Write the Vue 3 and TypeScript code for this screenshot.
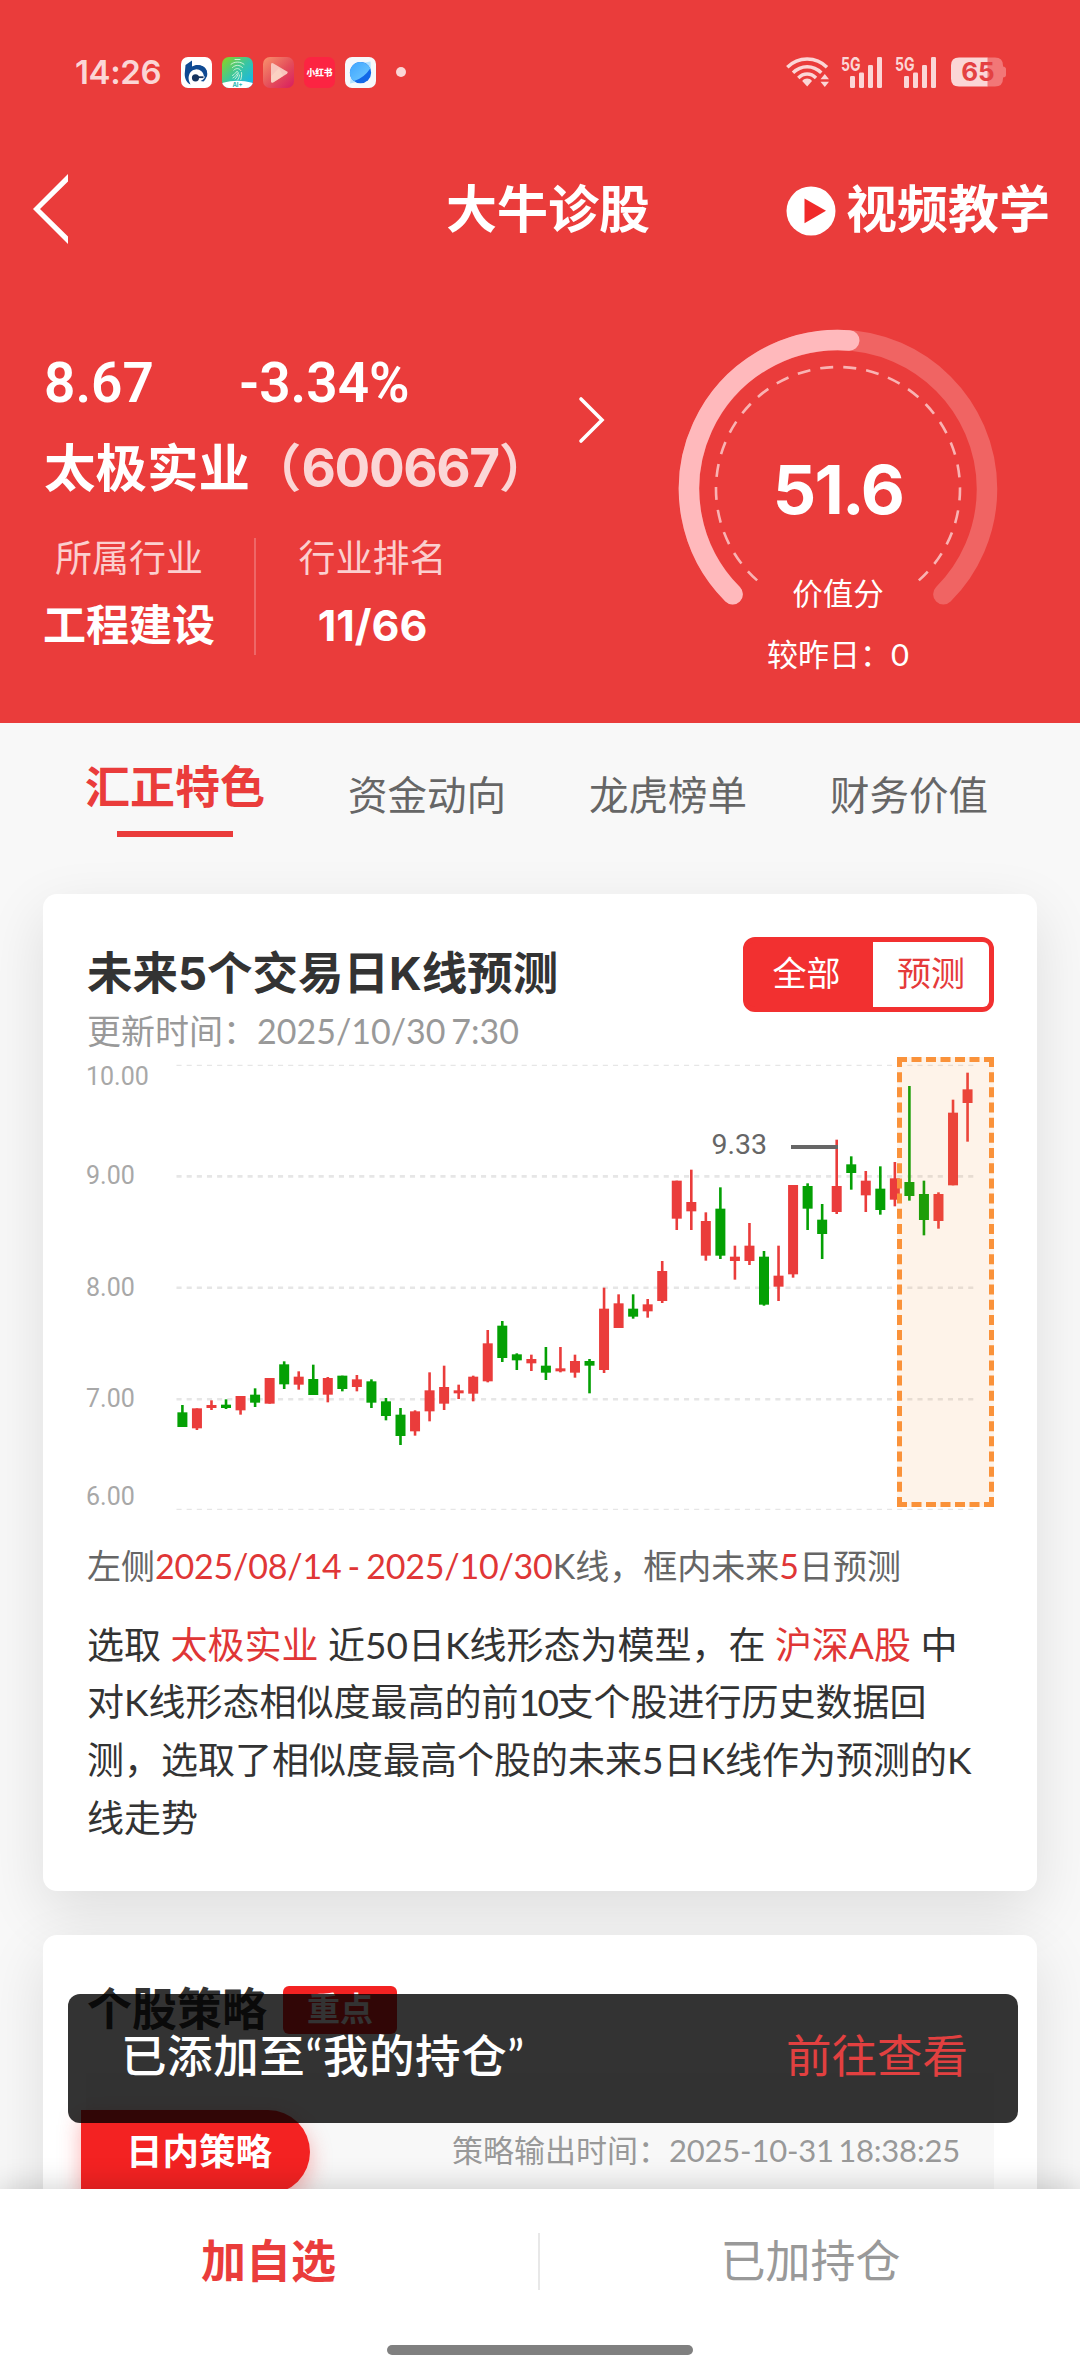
<script setup lang="ts">
interface Tab {
  label: string
  active: boolean
}

interface Candle {
  x: number
  color: string
  high: number
  top: number
  height: number
  low: number
}

const tabs: Tab[] = [
  { label: '汇正特色', active: true },
  { label: '资金动向', active: false },
  { label: '龙虎榜单', active: false },
  { label: '财务价值', active: false },
]

const UP = '#ea3c3b'
const DOWN = '#04a004'

// [direction, high, body top, body bottom, low] on the chart's fine vertical scale (3 units per pixel)
const series: [number, number, number, number, number][] = [
  [0, 1095, 1117, 1161, 1161], [1, 1105, 1105, 1165, 1170], [1, 1081, 1095, 1104, 1110],
  [0, 1078, 1094, 1104, 1107], [1, 1068, 1068, 1111, 1124], [0, 1045, 1064, 1088, 1101],
  [1, 1014, 1014, 1091, 1091], [0, 964, 973, 1033, 1047], [1, 994, 1010, 1034, 1049],
  [0, 974, 1017, 1065, 1065], [1, 1011, 1014, 1064, 1087], [0, 1007, 1007, 1047, 1054],
  [1, 1005, 1018, 1041, 1054], [0, 1018, 1024, 1088, 1104], [0, 1074, 1084, 1128, 1141],
  [0, 1104, 1124, 1188, 1215], [1, 1111, 1114, 1174, 1187], [1, 997, 1051, 1114, 1144],
  [1, 977, 1041, 1091, 1110], [1, 1034, 1051, 1060, 1077], [1, 1007, 1010, 1061, 1084],
  [1, 870, 910, 1024, 1027], [0, 843, 857, 954, 966], [0, 940, 943, 961, 990],
  [1, 944, 957, 970, 993], [0, 921, 977, 998, 1020], [1, 921, 985, 994, 997],
  [1, 944, 963, 998, 1013], [0, 957, 963, 977, 1060], [1, 743, 806, 990, 999],
  [1, 763, 790, 864, 864], [0, 763, 806, 830, 836], [1, 777, 793, 814, 833],
  [1, 663, 693, 783, 789], [1, 422, 422, 536, 570], [1, 389, 486, 514, 570],
  [1, 517, 543, 647, 662], [0, 442, 506, 647, 657], [1, 617, 650, 663, 719],
  [1, 549, 617, 663, 675], [0, 633, 650, 794, 797], [1, 617, 707, 740, 783],
  [1, 435, 435, 703, 713], [0, 430, 438, 506, 570], [0, 492, 539, 582, 657],
  [1, 299, 438, 516, 522], [0, 349, 373, 399, 449], [1, 393, 422, 466, 516],
  [0, 379, 446, 510, 524], [1, 366, 415, 479, 499], [0, 138, 426, 468, 482],
  [0, 422, 462, 540, 586], [1, 457, 462, 543, 566], [1, 179, 218, 436, 436],
  [1, 98, 148, 189, 305],
]

const toY = (v: number): number => v / 3 - 17

const candles: Candle[] = series.map(([up, high, top, bottom, low], i) => ({
  x: 94.4 + i * 14.54,
  color: up ? UP : DOWN,
  high: toY(high),
  top: toY(top),
  height: (bottom - top) / 3,
  low: toY(low),
}))

const gridLines = [
  { y: 8.4, w: 1.2 },
  { y: 119.4, w: 2.6 },
  { y: 230.7, w: 2.6 },
  { y: 342.3, w: 2.6 },
  { y: 452.4, w: 1.2 },
]

const axisLabels = [
  { text: '10.00', y: 28 },
  { text: '9.00', y: 127.3 },
  { text: '8.00', y: 238.7 },
  { text: '7.00', y: 350 },
  { text: '6.00', y: 448 },
]

// Gauge geometry: a 270° dial with the score measured from the lower left
const score = 51.6
const polar = (r: number, deg: number): string => {
  const a = (deg * Math.PI) / 180
  return `${(160 + r * Math.sin(a)).toFixed(2)} ${(160 - r * Math.cos(a)).toFixed(2)}`
}
const arc = (r: number, from: number, to: number): string =>
  `M${polar(r, from)} A${r} ${r} 0 ${to - from > 180 ? 1 : 0} 1 ${polar(r, to)}`

const trackPath = arc(149, -135, 135)
const valuePath = arc(149, -135, -135 + (270 * score) / 100)
const dashPath = arc(122, -138.5, 138.5)
</script>

<template>
  <div class="page">
    <header class="hero">
      <div class="status">
        <span class="clock">14:26</span>
        <div class="apps">
          <svg class="app" viewBox="0 0 31 31">
            <rect width="31" height="31" rx="7" fill="#fff" />
            <path d="M4.500 8 L11 3.500 V10.500 C14 7.700 19.500 7.200 23 10 C27.500 13.700 27 20.500 22.500 24.500 L19.500 24 C23 22.500 24.500 20 24 17.500 C23.500 13.500 19.500 11.500 15.500 12 C9 12.500 6.500 19 8 24 L9.500 27.500 C5.500 25.500 3.700 21.500 3.700 17 Z" fill="#0f4a93" />
            <path d="M11 9.500C15 7 20 7.500 23.500 10.500C26.500 13.500 26.500 17 26 19.500H23C22.500 15 19 12 15 12.200L11 13Z" fill="#0f4a93" />
            <circle cx="14.500" cy="20.800" r="3.600" fill="#16345f" />
            <path d="M14 20.200H22.500" stroke="#16345f" stroke-width="1.800" />
          </svg>
          <svg class="app" viewBox="0 0 31 31">
            <defs>
              <linearGradient id="fp" x1="0" y1="0" x2="1" y2="1">
                <stop offset="0" stop-color="#8fd41c" />
                <stop offset=".5" stop-color="#38c5a4" />
                <stop offset="1" stop-color="#12b2f5" />
              </linearGradient>
              <clipPath id="fpc"><rect width="31" height="31" rx="7" /></clipPath>
            </defs>
            <g clip-path="url(#fpc)">
              <rect width="31" height="31" fill="url(#fp)" />
              <ellipse cx="15.500" cy="29.500" rx="19" ry="5.800" fill="#fff" />
            </g>
            <g fill="none" stroke="#d9f7dc" stroke-width=".9" stroke-linecap="round">
              <path d="M13 2.500H18M9 7.300C12.500 4.300 18.500 4.300 22 7.300M10.500 10.500C13.500 7.600 17.500 7.600 20.500 10.500M11.800 13.200C14 10.800 17.300 11 18.800 13.500M10.500 18.500C13 17.500 13.500 15 15 14.500C17.500 14.500 16 19.500 13 22M11 21C14 19.500 14.500 17 15.200 16.500M19.500 15.500C20 18 19.500 20 18.800 22.500M17.500 18C17.300 20 16.500 22 15.500 23" />
            </g>
            <text x="15.500" y="30" text-anchor="middle" font-size="6" font-weight="700" fill="#26b5b1" class="mini">AI+</text>
          </svg>
          <svg class="app" viewBox="0 0 31 31">
            <defs>
              <linearGradient id="pl" x1="0" y1="0" x2="1" y2="1">
                <stop offset="0" stop-color="#f9946c" />
                <stop offset=".55" stop-color="#e44d5a" />
                <stop offset="1" stop-color="#d91c60" />
              </linearGradient>
            </defs>
            <rect width="31" height="31" rx="7" fill="url(#pl)" />
            <path d="M8 7.500Q8 5.300 10 6.300L24 14.500Q25.500 15.600 24 16.700L10.500 25.200Q8 26.500 8 24Z" fill="#f8c6bd" />
            <path d="M8.300 19L16 11L20 19L10 25.500Q8 26 8 24Z" fill="#fbd3c4" opacity=".8" />
          </svg>
          <svg class="app" viewBox="0 0 31 31">
            <rect width="31" height="31" rx="7" fill="#fc2442" />
            <text x="15.500" y="19" text-anchor="middle" font-size="8.700" font-weight="900" fill="#fff" class="mini">小红书</text>
          </svg>
          <svg class="app" viewBox="0 0 31 31">
            <defs>
              <linearGradient id="gl" x1="0" y1="0" x2="1" y2="1">
                <stop offset="0" stop-color="#3fa4ff" />
                <stop offset="1" stop-color="#70cbff" />
              </linearGradient>
            </defs>
            <rect width="31" height="31" rx="7" fill="#f6f8fb" />
            <path d="M5 26.500L6 17L17 6L25.500 4.500L25.800 12L16 24Z" fill="#b4e2ff" />
            <circle cx="15.500" cy="15.700" r="10.600" fill="#1268e8" />
            <path d="M25.200 11.500A10.600 10.600 0 1 0 9 24.100Q19 21 25.200 11.500Z" fill="url(#gl)" />
          </svg>
        </div>
        <i class="more-dot"></i>
        <div class="signals">
          <svg class="wifi" viewBox="0 0 44 32">
            <g fill="none" stroke="#fbd6d6" stroke-width="3.400">
              <path d="M1.300 11.300C12.300.2 30 .2 41 11.300" />
              <path d="M7 16.800C15 8.700 27.300 8.700 35.300 16.800" />
              <path d="M12.300 22C17.600 16.700 24.700 16.700 30 22" />
            </g>
            <path d="M16.200 25C19 21.800 23.300 21.800 26 25L21.200 30.500Z" fill="#fbd6d6" />
            <path d="M34.500 23.300L38.800 18L43 23.300ZM34.500 25.700H43L38.800 31Z" fill="#fbd6d6" />
          </svg>
          <svg v-for="n in 2" :key="n" class="cell" viewBox="0 0 42 34">
            <text x="0" y="16.300" font-size="19" font-weight="700" textLength="19.500" lengthAdjust="spacingAndGlyphs" fill="#fbd6d6" class="mini">5G</text>
            <g fill="#fbd6d6">
              <rect x="9" y="21" width="5" height="12" rx="1.200" />
              <rect x="18" y="17.500" width="5" height="15.500" rx="1.200" />
              <rect x="27" y="10" width="5" height="23" rx="1.200" />
              <rect x="36" y="2" width="5" height="31" rx="1.200" />
            </g>
          </svg>
          <svg class="battery" viewBox="0 0 56 30">
            <path d="M36 .5H44Q52 .5 52 8.500V9.500Q55 10 55 12V18Q55 20 52 20.500V21.500Q52 29.500 44 29.500H36Z" fill="#f27777" />
            <path d="M36.500 .5H8Q0 .5 0 8.500V21.500Q0 29.500 8 29.500H36.500Z" fill="#fbd6d6" />
            <text x="27" y="24.300" text-anchor="middle" font-size="26" font-weight="700" fill="#e44142" class="mini">65</text>
          </svg>
        </div>
      </div>

      <nav class="nav">
        <svg class="back" viewBox="0 0 36 72">
          <path d="M0 36L35 1V8.500L7 36L35 63.500V71Z" fill="#fff" />
        </svg>
        <h1>大牛诊股</h1>
        <div class="lesson">
          <svg viewBox="0 0 50 50">
            <circle cx="25" cy="25" r="24.500" fill="#fff" />
            <path d="M18.500 12.500L40 24.700L18.500 37.200Z" fill="#f02a2a" />
          </svg>
          <span>视频教学</span>
        </div>
      </nav>

      <section class="quote">
        <div class="stock">
          <div class="price"><span class="last">8.67</span><span>-3.34%</span></div>
          <div class="name">太极实业<span class="code">（<span class="digits">600667</span>）</span></div>
          <div class="meta">
            <div class="meta-col first">
              <span class="meta-label">所属行业</span>
              <b>工程建设</b>
            </div>
            <div class="meta-col second">
              <span class="meta-label">行业排名</span>
              <b>11/66</b>
            </div>
          </div>
        </div>
        <svg class="go" viewBox="0 0 28 48">
          <path d="M3 3L24 24L3 45" fill="none" stroke="#fff" stroke-width="3.600" stroke-linecap="round" />
        </svg>
        <div class="gauge">
          <svg viewBox="0 0 320 280">
            <path :d="trackPath" class="arc track" />
            <path :d="valuePath" class="arc value" />
            <path :d="dashPath" class="dash" />
          </svg>
          <div class="score">51.6</div>
          <div class="score-label">价值分</div>
          <div class="score-diff">较昨日：0</div>
        </div>
      </section>
    </header>

    <div class="tabs">
      <div v-for="t in tabs" :key="t.label" class="tab" :class="{ active: t.active }">{{ t.label }}</div>
    </div>

    <main>
      <section class="card forecast">
        <div class="card-head">
          <h2>未来5个交易日K线预测</h2>
          <div class="toggle"><span class="on">全部</span><span class="off">预测</span></div>
        </div>
        <div class="updated">更新时间：2025/10/30 7:30</div>
        <div class="chart">
          <svg viewBox="0 0 906 456">
            <line v-for="g in gridLines" :key="g.y" x1="88.500" x2="887" :y1="g.y" :y2="g.y" :stroke-width="g.w" class="grid" />
            <text v-for="l in axisLabels" :key="l.text" x="-2" :y="l.y" class="axis">{{ l.text }}</text>
            <g v-for="c in candles" :key="c.x" :fill="c.color">
              <rect :x="c.x - 1.300" :y="c.high" width="2.600" :height="c.low - c.high" />
              <rect :x="c.x - 5" :y="c.top" width="10" :height="c.height" />
            </g>
            <text x="623.500" y="96.500" class="peak">9.33</text>
            <rect x="703" y="88" width="47" height="4" fill="#666" />
          </svg>
          <div class="future"></div>
        </div>
        <p class="range">左侧<em class="date">2025/08/14 - 2025/10/30</em>K线，框内未来<em>5</em>日预测</p>
        <p class="explain">
          选取 <em>太极实业</em> 近50日K线形态为模型，在 <em>沪深A股</em> 中<br />对K线形态相似度最高的前<span class="count">10</span>支个股进行历史数据回<br />测，选取了相似度最高个股的未来5日K线作为预测的K<br />线走势
        </p>
      </section>

      <section class="card strategy">
        <div class="strategy-head">
          <h2>个股策略</h2>
          <span class="tag">重点</span>
        </div>
        <div class="panel">
          <div class="pill">日内策略</div>
          <div class="output">策略输出时间：<span>2025-10-31 18:38:25</span></div>
        </div>
      </section>
    </main>

    <div class="toast"><span>已添加至“我的持仓”</span><a>前往查看</a></div>

    <footer class="bar">
      <div class="actions">
        <div class="action add">加自选</div>
        <div class="action held">已加持仓</div>
      </div>
      <i class="home"></i>
    </footer>
  </div>
</template>

<style>
body {
  margin: 0;
}
</style>

<style scoped>
.page {
  position: relative;
  width: 1080px;
  height: 2373px;
  overflow: hidden;
  background: #f8f8f8;
  font-family: Lato, 'Noto Sans CJK SC', sans-serif;
  color: #333;
  white-space: nowrap;
}
h1, h2, p { margin: 0; }
em { font-style: normal; color: #e03636; }
svg { display: block; overflow: visible; }
.mini { font-family: Inter, 'Noto Sans CJK SC', sans-serif; }

.hero {
  box-sizing: border-box;
  height: 723px;
  padding-top: 52px;
  background: #ea3c3b;
  color: #fff;
}
.status {
  display: flex;
  align-items: center;
  height: 40px;
  padding-left: 75px;
}
.clock {
  width: 106px;
  font: 600 33px/40px Inter, sans-serif;
  letter-spacing: -0.4px;
  color: #fbd6d6;
}
.apps { display: flex; gap: 10px; }
.app { width: 31px; height: 31px; }
.more-dot {
  width: 10px;
  height: 10px;
  margin-left: 20px;
  border-radius: 50%;
  background: #fbd6d6;
}
.signals { display: flex; align-items: center; margin-left: 380px; }
.wifi { width: 44px; height: 32px; margin-right: 11px; }
.cell { width: 42px; height: 34px; margin-right: 12px; }
.battery { width: 56px; height: 30px; margin-left: 2px; }

.nav {
  display: flex;
  align-items: center;
  height: 80px;
  margin-top: 77px;
  padding: 0 30px 0 33px;
}
.back { width: 36px; height: 72px; }
h1 {
  margin-left: 377px;
  font-size: 51px;
  line-height: 60px;
  font-weight: 700;
}
.lesson {
  display: flex;
  align-items: center;
  gap: 10px;
  margin-left: auto;
  font-size: 51px;
  line-height: 60px;
  font-weight: 700;
}
.lesson svg { width: 50px; height: 50px; margin-top: 4px; }

.quote { display: flex; height: 474px; }
.stock { width: 578px; box-sizing: border-box; padding: 104px 0 0 44px; }
.price {
  display: flex;
  font: 600 55px/60px Roboto, sans-serif;
}
.last { width: 195px; }
.name {
  margin-top: 25px;
  font: 700 51.500px/60px Inter, 'Noto Sans CJK SC', sans-serif;
}
.code { color: #fbd6d6; }
.digits { font-size: 53px; letter-spacing: -1.4px; }
.meta { display: flex; margin-top: 40px; height: 117px; }
.meta-col {
  display: flex;
  flex-direction: column;
  align-items: center;
}
.first { width: 170px; padding-right: 40px; border-right: 2px solid #ee6767; }
.second { width: 233px; }
.meta-label { font-size: 37px; line-height: 40px; color: #fbcfcf; }
.meta b {
  margin-top: 25px;
  font: 700 43px/44px Inter, 'Noto Sans CJK SC', sans-serif;
}
.go { width: 28px; height: 48px; margin-top: 147px; }
.gauge {
  display: flex;
  flex-direction: column;
  align-items: center;
  width: 320px;
  margin: 80px 0 0 72px;
}
.gauge svg { width: 320px; height: 280px; flex: none; }
.arc { fill: none; stroke-width: 20.5; stroke-linecap: round; }
.track { stroke: #f06463; }
.value { stroke: #ffb9bc; }
.dash { fill: none; stroke: #f9b3b3; stroke-width: 2.6; stroke-dasharray: 13 10.07; }
.score {
  margin-top: -160px;
  font: 700 68px/80px Inter, sans-serif;
  letter-spacing: -1.8px;
}
.score-label { margin-top: 44px; font-size: 30.500px; line-height: 40px; }
.score-diff { margin-top: 21px; font-size: 31px; line-height: 40px; }

.tabs {
  display: flex;
  height: 171px;
  padding-left: 85px;
  box-sizing: border-box;
}
.tab {
  width: 241px;
  padding-top: 47px;
  font-size: 39.500px;
  line-height: 50px;
  color: #666;
}
.tab.active {
  position: relative;
  width: 263px;
  padding-top: 39px;
  font-size: 45px;
  font-weight: 700;
  color: #ea3c3b;
}
.tab.active::after {
  content: '';
  position: absolute;
  left: 32px;
  top: 108px;
  width: 116px;
  height: 6px;
  background: #ea3c3b;
}

.card {
  box-sizing: border-box;
  width: 994px;
  margin: 0 43px;
  border-radius: 14px;
  background: #fff;
  box-shadow: 0 20px 60px rgba(0, 0, 0, 0.11);
}
.forecast { height: 997px; padding: 43px 43px 0 44px; }
.card-head { display: flex; justify-content: space-between; height: 75px; }
.card-head h2 {
  padding-top: 12px;
  font: 700 45.500px/50px Inter, 'Noto Sans CJK SC', sans-serif;
}
.toggle {
  display: flex;
  box-sizing: border-box;
  width: 251px;
  height: 75px;
  border: 5px solid #f23030;
  border-radius: 12px;
  background: #f23030;
  font-size: 34px;
  line-height: 61px;
  text-align: center;
}
.on { box-sizing: border-box; width: 125px; padding-right: 8px; color: #fff; }
.off { flex: 1; border-radius: 0 6px 6px 0; background: #fff; color: #e53a3a; }
.updated { margin-top: -1px; font-size: 34px; line-height: 40px; color: #999; word-spacing: -3px; }
.chart { position: relative; margin: 6px 0 0 1px; }
.chart svg { width: 906px; height: 456px; }
.grid { stroke: #e6e6e6; stroke-dasharray: 5.1 5.05; }
.axis { font: 400 25px Roboto, sans-serif; fill: #a8a8a8; }
.peak { font: 400 28.500px Roboto, sans-serif; fill: #666; }
.future {
  position: absolute;
  right: 0;
  top: 0;
  box-sizing: border-box;
  width: 97px;
  height: 450px;
  border: 5px dashed #fa923a;
  background: rgba(250, 146, 58, 0.11);
}
.range { margin-top: 33px; font-size: 34px; line-height: 40px; color: #666; }
.date { letter-spacing: -0.2px; word-spacing: -2.4px; }
.explain { margin-top: 29.500px; font-size: 37px; line-height: 57.700px; color: #333; }
.count { letter-spacing: -2.500px; }

.strategy { height: 500px; margin-top: 44px; padding: 50px 43px 0; }
.strategy-head { display: flex; height: 88px; padding-left: 1px; }
.strategy-head h2 { width: 196px; font-size: 45px; line-height: 49px; font-weight: 700; }
.tag {
  width: 114px;
  height: 48px;
  margin-top: 1px;
  border-radius: 6px;
  background: #f32222;
  color: #fff;
  font-size: 33px;
  line-height: 45px;
  font-weight: 600;
  text-align: center;
}
.panel {
  display: flex;
  justify-content: space-between;
  height: 300px;
  padding: 37px 34px 0 0;
  background: #f8f8f8;
}
.pill {
  box-sizing: border-box;
  width: 229px;
  height: 84px;
  margin-left: -5px;
  padding-left: 45px;
  border-radius: 0 42px 42px 0;
  background: #f32222;
  box-shadow: 0 8px 22px rgba(243, 34, 34, 0.35);
  color: #fff;
  font-size: 36.500px;
  line-height: 82px;
  font-weight: 700;
}
.output { font-size: 31px; line-height: 81px; color: #999; }
.output span { letter-spacing: -0.2px; word-spacing: -3.400px; }

.toast {
  position: absolute;
  left: 68px;
  top: 1994px;
  box-sizing: border-box;
  display: flex;
  justify-content: space-between;
  width: 950px;
  height: 129px;
  padding: 31px 50px 0 53px;
  border-radius: 12px;
  background: rgba(0, 0, 0, 0.8);
  color: #fff;
  font-size: 45.500px;
  line-height: 62px;
}
.toast span { font-weight: 500; letter-spacing: 0.6px; }
.toast a { color: #e24040; }

.bar {
  position: absolute;
  left: 0;
  bottom: 0;
  display: flex;
  flex-direction: column;
  align-items: center;
  width: 1080px;
  height: 184px;
  background: #fff;
  box-shadow: 0 0 30px rgba(0, 0, 0, 0.2);
}
.actions { display: flex; height: 57px; margin-top: 44px; line-height: 57px; font-size: 45px; }
.action { box-sizing: border-box; width: 541px; text-align: center; }
.add { color: #ea3c3b; font-weight: 700; border-right: 2px solid #e8e8e8; }
.held { color: #999; }
.home { width: 306px; height: 10px; margin-top: 55px; border-radius: 5px; background: #808080; }
</style>
